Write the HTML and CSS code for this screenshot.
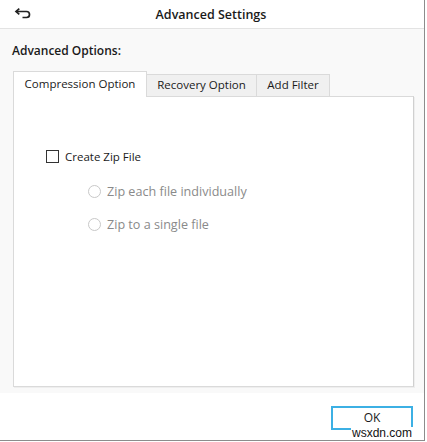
FILE: index.html
```html
<!DOCTYPE html>
<html>
<head>
<meta charset="utf-8">
<link rel="stylesheet" href="styles.css">
</head>
<body>
<div class="window">
  <header class="header">
    <svg class="back" width="18" height="12" viewBox="0 0 18 12">
      <path d="M2 3.5 H12.5 A3 3 0 0 1 12.5 9.5 H8.5" fill="none" stroke="#222" stroke-width="1.7"/>
      <path d="M5.3 0.7 L2 3.5 L5.3 6.3" fill="none" stroke="#222" stroke-width="1.7"/>
    </svg>
    <div class="title">Advanced Settings</div>
  </header>
  <main class="main">
    <div class="section-label">Advanced Options:</div>
    <div class="tabs">
      <div class="tab tab-active tab-compression">Compression Option</div>
      <div class="tab tab-recovery">Recovery Option</div>
      <div class="tab tab-filter">Add Filter</div>
    </div>
    <div class="panel">
      <label class="check-row">
        <span class="checkbox"></span>
        <span>Create Zip File</span>
      </label>
      <div class="radio-row">
        <span class="radio"></span>
        <span>Zip each file individually</span>
      </div>
      <div class="radio-row">
        <span class="radio"></span>
        <span>Zip to a single file</span>
      </div>
    </div>
  </main>
  <footer class="footer">
    <button class="ok">OK</button>
  </footer>
  <div class="watermark">wsxdn.com</div>
</div>
</body>
</html>
```
FILE: styles.css
```css
html, body {
  margin: 0;
  padding: 0;
  background: #ffffff;
}
body {
  font-family: "Open Sans", "Noto Sans", sans-serif;
  color: #1a1a1a;
  width: 427px;
  height: 442px;
  overflow: hidden;
}
.window {
  position: relative;
  width: 424px;
  height: 440px;
  border-right: 1px solid #8c8c8c;
  border-bottom: 1px solid #8c8c8c;
  display: flex;
  flex-direction: column;
  background: #ffffff;
}
.header {
  height: 28px;
  border-bottom: 1px solid #e3e3e3;
  display: flex;
  align-items: center;
  position: relative;
  flex: none;
}
.back {
  margin-left: 14px;
}
.title {
  position: absolute;
  left: 0;
  right: 0;
  text-align: center;
  font-size: 12.5px;
  font-weight: 600;
  color: #1a1a1a;
  padding-right: 2px;
}
.main {
  background: #f9f9f9;
  height: 364px;
  padding: 13px 10px 0 13px;
  box-sizing: border-box;
  flex: none;
}
.section-label {
  font-size: 12px;
  font-weight: 600;
  margin-left: -1px;
  line-height: 17px;
  height: 29px;
}
.tabs {
  display: flex;
  align-items: flex-end;
  height: 26px;
  position: relative;
  z-index: 1;
  margin-bottom: -1px;
}
.tab {
  font-size: 11.5px;
  box-sizing: border-box;
  border: 1px solid #dadada;
  border-bottom: none;
  text-align: center;
  color: #1a1a1a;
}
.tab-active {
  background: #ffffff;
  height: 26px;
  line-height: 23px;
}
.tab-recovery, .tab-filter {
  background: #f0f0f0;
  height: 23px;
  line-height: 20px;
  border-bottom: 1px solid #dadada;
  border-left: none;
}
.tab-compression { width: 134px; }
.tab-recovery { width: 110px; }
.tab-filter { width: 73px; }
.panel {
  background: #ffffff;
  border: 1px solid #dadada;
  border-right-color: #d0d0d0;
  height: 291px;
  box-sizing: border-box;
  padding: 51px 0 0 32px;
  box-shadow: 1px 1px 0 #eeeeee;
}
.check-row {
  display: flex;
  align-items: center;
  font-size: 11.5px;
  height: 16px;
}
.checkbox {
  width: 11px;
  height: 11px;
  border: 1px solid #333333;
  margin-right: 6px;
  background: #fff;
}
.radio-row {
  display: flex;
  align-items: center;
  font-size: 12.6px;
  color: #8a8a8a;
  margin-left: 42px;
  height: 16px;
}
.check-row + .radio-row { margin-top: 19px; }
.radio-row + .radio-row { margin-top: 17px; }
.radio {
  width: 11px;
  height: 11px;
  border: 1px solid #c8c8c8;
  border-radius: 50%;
  margin-right: 6px;
  background: #fff;
}
.footer {
  flex: 1;
  background: #ffffff;
  display: flex;
  justify-content: flex-end;
  padding: 13px 11px 0 0;
  box-sizing: border-box;
}
.ok {
  width: 82px;
  height: 24px;
  border: 2px solid #3cb0e4;
  background: #ffffff;
  font-family: "Open Sans", "Noto Sans", sans-serif;
  font-size: 12px;
  color: #1a1a1a;
  padding: 0;
  line-height: 18px;
}
.watermark {
  position: absolute;
  right: 11px;
  bottom: 1px;
  font-family: "Liberation Sans", Arial, sans-serif;
  font-size: 12px;
  line-height: 12px;
  color: #111;
  background: #ffffff;
  padding: 0 1px;
}
```
